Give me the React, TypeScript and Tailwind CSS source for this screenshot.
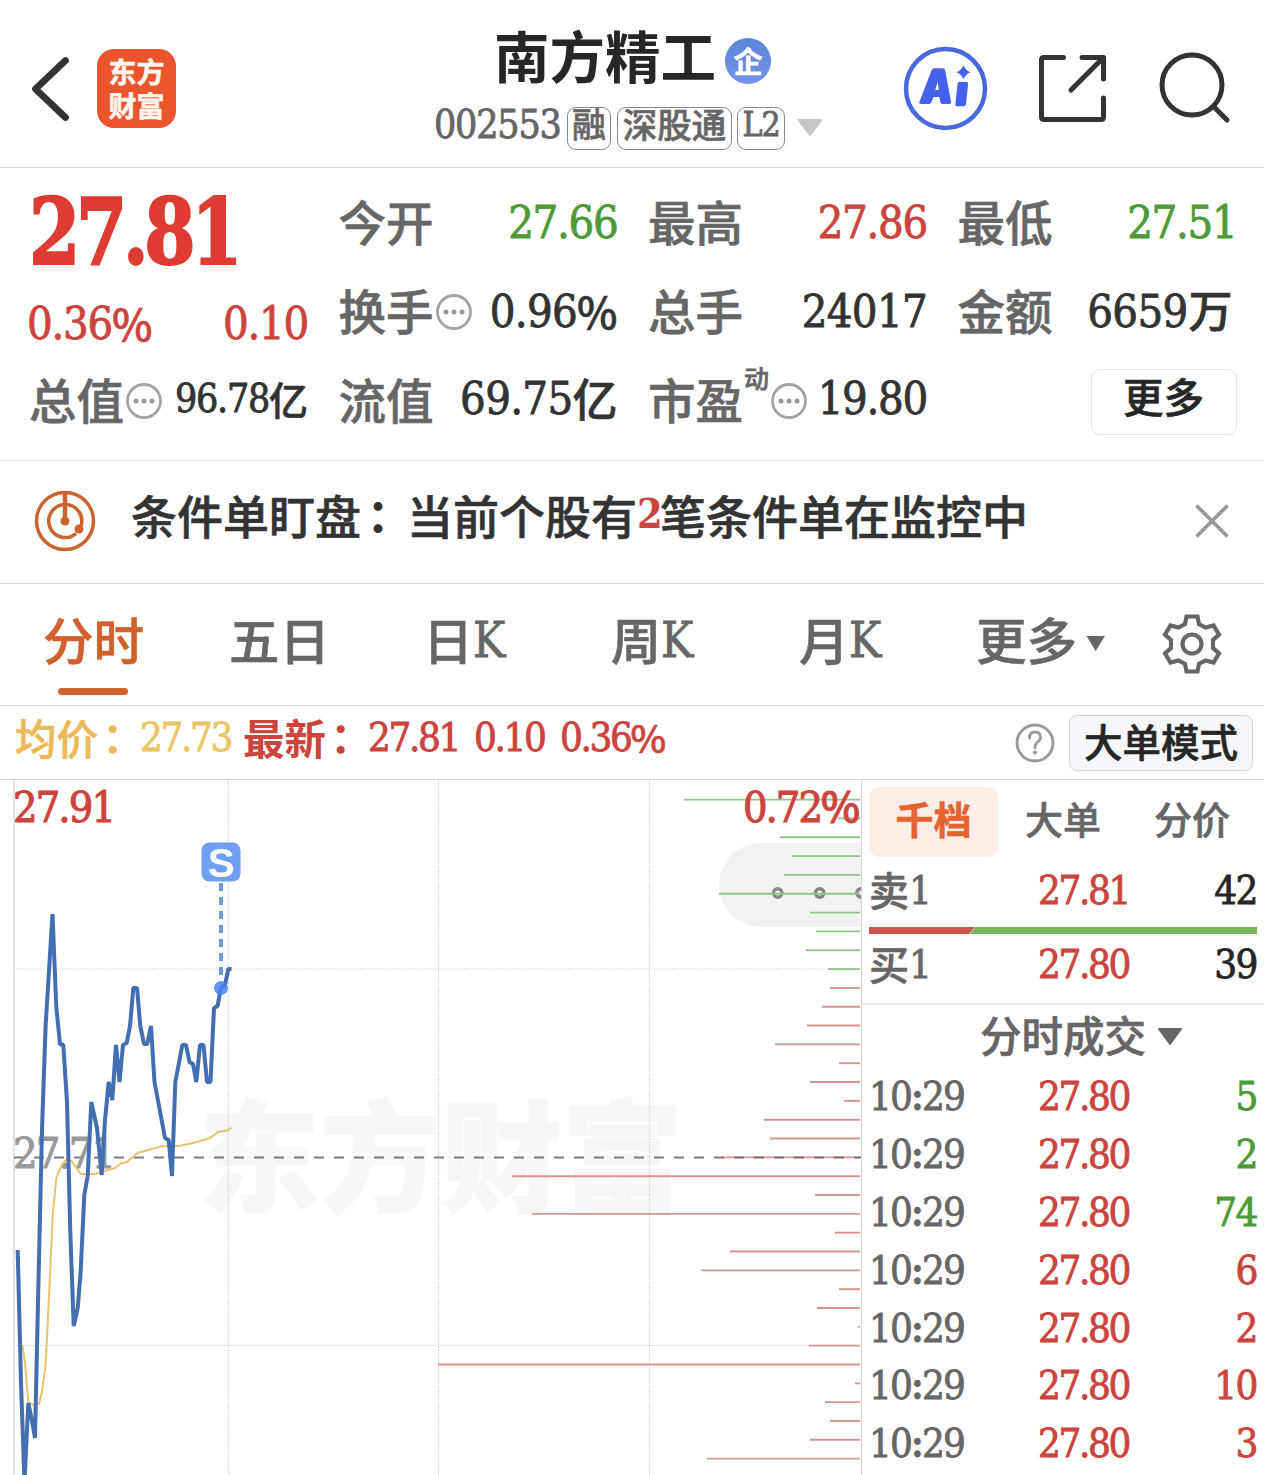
import React from "react";

function Num({ children, className = "" }: { children: React.ReactNode; className?: string }) {
  return (
    <span
      className={
        "whitespace-nowrap font-['DejaVu_Serif_Condensed','DejaVu_Serif','Noto_Sans_CJK_SC',serif] [font-stretch:condensed] [-webkit-text-stroke:0.8px_currentColor] " +
        className
      }
    >
      {children}
    </span>
  );
}

function Cjk({ children, className = "" }: { children: React.ReactNode; className?: string }) {
  return (
    <span className={"whitespace-nowrap font-['Noto_Sans_CJK_SC',sans-serif] [-webkit-text-stroke:0.6px_currentColor] " + className}>
      {children}
    </span>
  );
}

function Colon({ className = "" }: { className?: string }) {
  return <span className={"font-['Noto_Sans_CJK_TC',sans-serif] font-bold " + className}>：</span>;
}

function Dots({ className }: { className: string }) {
  return (
    <svg className={"mt-[1px] h-[38px] w-[38px] shrink-0 " + className} viewBox="0 0 38 38">
      <circle cx="19" cy="19" r="16.5" fill="none" stroke="#a3a3a3" strokeWidth="2.8" />
      <circle cx="11" cy="19" r="2.5" fill="#999" />
      <circle cx="19" cy="19" r="2.5" fill="#999" />
      <circle cx="27" cy="19" r="2.5" fill="#999" />
    </svg>
  );
}

function Header() {
  return (
    <header className="flex h-[168px] shrink-0 border-b border-[#d6d6d6]">
      <div className="flex w-[420px] items-start">
        <svg className="mt-[54px] ml-[28px] h-[70px] w-[44px]" viewBox="28 54 44 70">
          <path d="M65.500 60.500L35.500 89L65.500 117.500" fill="none" stroke="#333" strokeWidth="6.800" strokeLinecap="round" strokeLinejoin="round" />
        </svg>
        <div className="mt-[49px] ml-[25px] flex h-[79px] w-[79px] flex-col items-center rounded-[17px] bg-[#ea552b] pt-[5px] text-[28px] leading-[34px] font-bold text-[#fff6f0]">
          <Cjk>东方</Cjk>
          <Cjk>财富</Cjk>
        </div>
      </div>
      <div className="flex w-[430px] flex-col">
        <div className="flex h-[100px] pl-[74px]">
          <Cjk className="mt-[14px] text-[55.500px] leading-[80px] font-bold text-[#262626] [-webkit-text-stroke:0px]">南方精工</Cjk>
          <div className="mt-[38px] ml-[9px] flex h-[46px] w-[46px] items-center justify-center rounded-full bg-gradient-to-b from-[#5d83d8] to-[#7394e8]">
            <Cjk className="-mt-[3px] text-[29px] leading-[40px] font-bold text-white">企</Cjk>
          </div>
        </div>
        <div className="flex h-[60px] pl-[14px] text-[#666]">
          <Num className="mt-[1px] w-[133px] text-[39px] leading-[48px] tracking-[-1.200px]">002553</Num>
          <div className="mt-[7px] flex h-[43px] w-[44px] items-start justify-center rounded-[9px] border-[1.500px] border-[#888]">
            <Cjk className="text-[34px] leading-[30px] font-medium">融</Cjk>
          </div>
          <div className="mt-[7px] ml-[6px] flex h-[43px] w-[115px] items-start justify-center rounded-[9px] border-[1.500px] border-[#888]">
            <Cjk className="text-[34.500px] leading-[30px] font-medium">深股通</Cjk>
          </div>
          <div className="mt-[7px] ml-[5px] flex h-[43px] w-[48px] items-start justify-center rounded-[9px] border-[1.500px] border-[#888]">
            <Num className="text-[33.500px] leading-[34px] tracking-[-1px]">L2</Num>
          </div>
          <svg className="mt-[18px] ml-[11px] h-[20px] w-[28px]" viewBox="0 0 28 20">
            <path d="M2.500 2H25.500L14 17Z" fill="#c6c6c6" stroke="#c6c6c6" strokeWidth="2" strokeLinejoin="round" />
          </svg>
        </div>
      </div>
      <svg className="h-[167px] w-[414px]" viewBox="850 0 414 167" fill="none">
        <circle cx="945.500" cy="88.500" r="39.500" stroke="#4a68de" strokeWidth="4.500" />
        <path
          fillRule="evenodd"
          d="M931.500 70.500Q932.200 68.300 934.500 68.300H942.500Q944.700 68.300 945.200 70.500L951 101.500Q951.300 104 949 104H942.500Q940.500 104 940.200 102L939.400 97H933.500L931.500 102Q930.800 104 928.800 104H921Q918.500 104 919.500 101.500ZM935.300 90H938.700L937.800 81.500Z"
          fill="#4363ee"
        />
        <path d="M959.500 82H966.500Q968.300 82 968.100 84L966 104Q965.700 106.300 963.800 106.300H957Q955.200 106.300 955.400 104L957.500 84Q957.700 82 959.500 82Z" fill="#4363ee" />
        <path d="M963.500 65.500Q966 70.500 970.500 72.200Q966 74 963.500 79Q961 74 956.500 72.200Q961 70.500 963.500 65.500Z" fill="#4363ee" />
        <g stroke="#333" strokeWidth="5" strokeLinecap="round" strokeLinejoin="round">
          <path d="M1063.500 57.500H1044Q1041.500 57.500 1041.500 60V117Q1041.500 119.500 1044 119.500H1101Q1103.500 119.500 1103.500 117V98" />
          <path d="M1082 57.500H1103.500V79M1103.500 57.500L1071 90" />
          <circle cx="1192" cy="85" r="30" />
          <path d="M1214 107L1227 120" />
        </g>
      </svg>
    </header>
  );
}

function Stat({
  label,
  children,
  color = "text-[#333]",
  info,
  sup,
}: {
  label: string;
  children: React.ReactNode;
  color?: string;
  info?: boolean;
  sup?: string;
}) {
  return (
    <div className="flex h-[89px] items-center">
      <Cjk className="-mt-[5px] text-[47.500px] leading-[89px] font-medium text-[#666]">{label}</Cjk>
      {sup && <Cjk className="-mt-[48px] ml-[1px] w-[26px] text-[25px] leading-[30px] font-medium text-[#666]">{sup}</Cjk>}
      {info && <Dots className={sup ? "" : "ml-[1px]"} />}
      <span className={"ml-auto flex items-center " + color}>{children}</span>
    </div>
  );
}

const V = "text-[45px] leading-[80px] tracking-[-1.300px]";
const VI = "text-[45px] leading-[80px] tracking-[-0.700px]";

function Quote() {
  return (
    <section className="grid h-[293px] shrink-0 grid-cols-[279px_279px_279px_279px] grid-rows-[89px_89px_89px] gap-x-[30.500px] border-b border-[#ececec] pt-[10px] pl-[29px]">
      <div className="row-span-2 flex flex-col">
        <Num className="mt-[6px] origin-left scale-x-[0.900] text-[91px] leading-[96px] font-bold tracking-[-4.800px] text-[#de3b33] [-webkit-text-stroke:2px_currentColor]">
          27.81
        </Num>
        <div className="mt-[4px] -ml-[2px] flex justify-between text-[#cb443d]">
          <span className="flex items-center">
            <Num className={V}>0.36</Num>
            <Cjk className="-mt-[4px] text-[43px] leading-[80px] font-medium">%</Cjk>
          </span>
          <Num className={V}>0.10</Num>
        </div>
      </div>
      <Stat label="今开" color="text-[#4d9a38]">
        <Num className={V}>27.66</Num>
      </Stat>
      <Stat label="最高" color="text-[#cb443d]">
        <Num className={V}>27.86</Num>
      </Stat>
      <Stat label="最低" color="text-[#4d9a38]">
        <Num className={V}>27.51</Num>
      </Stat>
      <Stat label="换手" info>
        <Num className={VI}>0.96</Num>
        <Cjk className="-mt-[4px] text-[43px] leading-[80px] font-medium">%</Cjk>
      </Stat>
      <Stat label="总手">
        <Num className={VI}>24017</Num>
      </Stat>
      <Stat label="金额">
        <Num className={VI}>6659</Num>
        <Cjk className="-mt-[5px] mr-[4px] ml-[1px] text-[44px] leading-[80px] font-medium">万</Cjk>
      </Stat>
      <Stat label="总值" info>
        <Num className="-mt-[4px] text-[39px] leading-[80px] tracking-[-1.300px]">96.78</Num>
        <Cjk className="-mt-[6px] text-[39px] leading-[80px] font-medium">亿</Cjk>
      </Stat>
      <Stat label="流值">
        <Num className={"-mt-[4px] " + VI}>69.75</Num>
        <Cjk className="-mt-[6px] text-[45px] leading-[80px] font-medium">亿</Cjk>
      </Stat>
      <Stat label="市盈" info sup="动">
        <Num className={"-mt-[4px] " + V}>19.80</Num>
      </Stat>
      <div className="mt-[13px] ml-auto flex h-[66px] w-[146px] items-start justify-center rounded-[9px] border-[1.500px] border-[#e4e4e4]">
        <Cjk className="text-[40.500px] leading-[51px] font-medium text-[#262626]">更多</Cjk>
      </div>
    </section>
  );
}

function Notice() {
  return (
    <section className="flex h-[123px] shrink-0 border-b border-[#d6d6d6]">
      <svg className="mt-[28px] ml-[33px] h-[64px] w-[64px]" viewBox="0 0 64 64" fill="none" stroke="#c9632f">
        <circle cx="32" cy="32" r="28.500" strokeWidth="3.500" />
        <path d="M32 15.500A16.500 16.500 0 1 0 43 44.500M32 15.500A16.500 16.500 0 0 1 48 37" strokeWidth="3.500" />
        <path d="M32 4V32" strokeWidth="4.500" />
        <circle cx="32" cy="32" r="4.500" fill="#c9632f" stroke="none" />
        <circle cx="46" cy="40" r="4.500" fill="#c9632f" stroke="none" />
      </svg>
      <div className="mt-[13px] ml-[34px] flex text-[46px] leading-[80px] font-medium text-[#333]">
        <Cjk>条件单盯盘</Cjk>
        <Colon className="-ml-[6px] w-[52px]" />
        <Cjk>当前个股有</Cjk>
        <Num className="w-[23px] text-[41px] font-bold tracking-[-1px] text-[#cb443d] [-webkit-text-stroke:0px]">2</Num>
        <Cjk>笔条件单在监控中</Cjk>
      </div>
      <svg className="mt-[42px] mr-[34px] ml-auto h-[36px] w-[36px]" viewBox="0 0 36 36">
        <path d="M2.500 2.500L33.500 33.500M33.500 2.500L2.500 33.500" stroke="#999" strokeWidth="3.800" />
      </svg>
    </section>
  );
}

function KTab({ ch, className }: { ch: string; className: string }) {
  return (
    <div className={"flex text-[#666] " + className}>
      <Cjk className="text-[50px] leading-[108px] font-medium">{ch}</Cjk>
      <Num className="text-[48px] leading-[112px]">K</Num>
    </div>
  );
}

function Tabs() {
  return (
    <nav className="flex h-[122px] shrink-0 border-b border-[#d6d6d6] pl-[43px]">
      <div className="flex w-[186px] flex-col">
        <Cjk className="text-[50.500px] leading-[108px] font-medium text-[#d0612c]">分时</Cjk>
        <div className="-mt-[4px] ml-[15px] h-[7px] w-[70px] rounded-full bg-[#d0612c]" />
      </div>
      <Cjk className="w-[194px] text-[50.500px] leading-[108px] font-medium text-[#666]">五日</Cjk>
      <KTab ch="日" className="w-[188px]" />
      <KTab ch="周" className="w-[188px]" />
      <KTab ch="月" className="w-[177px]" />
      <Cjk className="text-[50.500px] leading-[108px] font-medium text-[#666]">更多</Cjk>
      <svg className="mt-[51px] ml-[8px] h-[18px] w-[22px]" viewBox="0 0 22 18">
        <path d="M1.500 1H20L10.700 16Z" fill="#666" />
      </svg>
      <svg className="mt-[28px] ml-[53px] h-[64px] w-[64px]" viewBox="-32 -32 64 64" fill="none" stroke="#666" strokeWidth="4.200">
        <path d="M-5.500 -27.500H5.500L7 -20L13.500 -16.500L21.500 -18.500L27 -9.500L21 -4V4L27 9.500L21.500 18.500L13.500 16.500L7 20L5.500 27.500H-5.500L-7 20L-13.500 16.500L-21.500 18.500L-27 9.500L-21 4V-4L-27 -9.500L-21.500 -18.500L-13.500 -16.500L-7 -20Z" />
        <circle r="9.500" />
      </svg>
    </nav>
  );
}

const S = "text-[40px] leading-[62px] tracking-[-2.400px]";

function InfoBar() {
  return (
    <section className="flex h-[74px] shrink-0 border-b border-[#d6d6d6] pl-[15px]">
      <div className="flex w-[125px] text-[41.500px] leading-[62px] font-medium text-[#ebba58]">
        <Cjk>均价</Cjk>
        <Colon className="-ml-[6px]" />
      </div>
      <Num className={"w-[103px] text-[#ebc566] " + S}>27.73</Num>
      <div className="flex w-[125px] text-[41.500px] leading-[62px] font-bold text-[#cb443d]">
        <Cjk className="[-webkit-text-stroke:0px]">最新</Cjk>
        <Colon className="-ml-[6px]" />
      </div>
      <Num className={"w-[106px] text-[#cb443d] " + S}>27.81</Num>
      <Num className={"w-[86px] text-[#cb443d] " + S}>0.10</Num>
      <Num className={"text-[#cb443d] " + S}>0.36</Num>
      <Cjk className="text-[38px] leading-[61px] font-medium text-[#cb443d]">%</Cjk>
      <svg className="mt-[16px] mr-[13px] ml-auto h-[42px] w-[42px]" viewBox="0 0 42 42" fill="none" stroke="#9a9a9a">
        <circle cx="21" cy="21" r="18" strokeWidth="3" />
        <path d="M15.500 16Q15.500 10 21 10Q26.500 10 26.500 15.500Q26.500 18 23.500 20Q21 22 21 25V26" strokeWidth="2.800" strokeLinecap="round" />
        <circle cx="21" cy="30.500" r="2.100" fill="#9a9a9a" stroke="none" />
      </svg>
      <div className="mt-[9px] mr-[11px] flex h-[56px] w-[184px] justify-center rounded-[8px] border-[1.500px] border-[#d2d3d6] bg-[#f6f7fa]">
        <Cjk className="text-[38.500px] leading-[48px] font-medium text-[#262626]">大单模式</Cjk>
      </div>
    </section>
  );
}

const price =
  "17.7,1250 21,1383 24.5,1482 28.3,1403 31.8,1420 35,1438 38.3,1289 42,1130 45.6,1026 52.5,914 56.3,1007 60,1044 63.3,1045 67,1102 70.3,1232 73.7,1326 77.7,1308 80.7,1271 84.3,1195 87.7,1176 91.3,1102 97,1128 101.7,1175 105,1120 108.7,1082 112.3,1100 116,1045 119.5,1082 123,1045 126.700,1043 130,1026 133.3,988 137,988 140.3,1026 144,1044 147.3,1044 151,1026 154.5,1082 163.5,1130 165,1138 168.7,1140 172,1176 175.3,1082 179,1063 182.3,1045 186,1045 189.5,1062 193,1064 196.3,1082 200,1045 203.5,1045 207,1082 210.5,1082 214,1008 217.5,1006 221,988 225,985 228.3,969 231.5,969";
const average =
  "22.3,1345 25,1363 28.3,1402 33.5,1405 39,1404 42.3,1390 45.7,1363 49,1297 52.7,1215 56.3,1178 61.7,1165 66.7,1159 71.7,1161 80.7,1174 95,1174 103,1171.5 115,1168 120.7,1163.5 126.7,1162 138.3,1152.7 161.7,1146.3 180,1145.7 193,1143 210,1138 218,1132 226.7,1130.5 231.5,1127.7";
const barStarts = [
  684, 838, 780, 792, 784, 719, 810, 816, 806, 828, 830, 822, 807, 775, 839, 810, 844, 764, 770, 722, 512, 815, 532, 835,
  730, 701.5, 839, 817, 858, 809, 438, 855, 825, 830, 810, 707,
];

function ChartLabel({ x, y, width, color, children }: { x: number; y: number; width: number; color: string; children: string }) {
  return (
    <text
      x={x}
      y={y}
      fontSize="43"
      textLength={width}
      fill={color}
      stroke={color}
      strokeWidth="1"
      fontFamily="DejaVu Serif Condensed, DejaVu Serif, serif"
      fontStretch="condensed"
    >
      {children}
    </text>
  );
}

function Chart() {
  return (
    <svg className="h-[695px] w-[861px] shrink-0 overflow-visible" viewBox="0 780 861 695">
      <text x="199" y="1202" textLength="484" lengthAdjust="spacingAndGlyphs" fontSize="121" fontWeight="900" fill="#f7f7f7" stroke="#f7f7f7" strokeWidth="1.500" fontFamily="Noto Sans CJK SC, sans-serif">
        东方财富
      </text>
      <path d="M861 843H761A42 42 0 0 0 761 927H861Z" fill="#f2f2f2" />
      <path d="M14 780V1475" stroke="#dcdcdc" strokeWidth="1.600" />
      <path d="M228.300 780V1475M438.500 780V1475M649.500 780V1475M14 969H861M14 1345.500H861" stroke="#cfcfcf" strokeWidth="1.200" strokeDasharray="1.300 1.300" />
      <circle cx="777.700" cy="893" r="4.200" fill="#fff" stroke="#858585" strokeWidth="3.400" />
      <circle cx="819.700" cy="893" r="4.200" fill="#fff" stroke="#858585" strokeWidth="3.400" />
      <path d="M861 888.800A4.200 4.200 0 0 0 861 897.200" fill="none" stroke="#858585" strokeWidth="3.400" />
      {barStarts.map((x, i) => (
        <path key={i} d={`M${x} ${799.6 + i * 18.83}H860`} stroke={i < 10 ? "#8fc687" : "#d69490"} strokeWidth="1.900" />
      ))}
      <path d="M14 1157.500H861" stroke="#666" strokeOpacity="0.850" strokeWidth="2" strokeDasharray="10 10" />
      <ChartLabel x={13} y={1168} width={103} color="#999">
        27.71
      </ChartLabel>
      <polyline points={average} fill="none" stroke="#e8c26c" strokeWidth="2" />
      <path d="M221 883V980" stroke="#6f9ad6" strokeWidth="4" strokeDasharray="8 6" />
      <polyline points={price} fill="none" stroke="#416fb2" strokeWidth="4" strokeLinejoin="bevel" />
      <circle cx="221" cy="988" r="7" fill="#4a82f0" fillOpacity="0.850" />
      <rect x="201.500" y="842.500" width="39" height="39" rx="8" fill="#6f9ff3" />
      <text x="221" y="877" fontSize="40" fontWeight="700" textAnchor="middle" fill="#fff" fontFamily="Liberation Sans, sans-serif">
        S
      </text>
      <ChartLabel x={13} y={822} width={103} color="#cb443d">
        27.91
      </ChartLabel>
      <ChartLabel x={743} y={822} width={80} color="#cb443d">
        0.72
      </ChartLabel>
      <text x="821" y="822" fontSize="41" fontWeight="500" textLength="39" lengthAdjust="spacingAndGlyphs" fill="#cb443d" stroke="#cb443d" fontFamily="Noto Sans CJK SC, sans-serif">
        %
      </text>
    </svg>
  );
}

function Row({ left, price, qty, color, className }: { left: React.ReactNode; price: string; qty: string; color: string; className: string }) {
  return (
    <div className={"flex pr-[7px] pl-[7px] " + className}>
      <div className="flex w-[169px] text-[#666]">{left}</div>
      <Num className="text-[40px] tracking-[-2.400px] text-[#cb443d]">{price}</Num>
      <Num className={"ml-auto text-[40px] tracking-[-1.500px] " + color}>{qty}</Num>
    </div>
  );
}

const trades = [
  ["5", "text-[#4d9a38]"],
  ["2", "text-[#4d9a38]"],
  ["74", "text-[#4d9a38]"],
  ["6", "text-[#cb443d]"],
  ["2", "text-[#cb443d]"],
  ["10", "text-[#cb443d]"],
  ["3", "text-[#cb443d]"],
];

function Level({ name }: { name: string }) {
  return (
    <>
      <Cjk className="-mt-[1px] text-[40px] font-medium">{name}</Cjk>
      <Num className="text-[40px]">1</Num>
    </>
  );
}

function Side() {
  return (
    <aside className="flex w-[403px] shrink-0 flex-col border-l-[1.500px] border-[#d6d6d6]">
      <div className="mt-[7px] ml-[7px] flex h-[70px] text-[38px] leading-[61px]">
        <div className="flex h-[70px] w-[129px] justify-center rounded-[10px] bg-[#fcede6]">
          <Cjk className="font-bold text-[#e4632f] [-webkit-text-stroke:0.3px_currentColor]">千档</Cjk>
        </div>
        <Cjk className="ml-[27px] font-medium text-[#666]">大单</Cjk>
        <Cjk className="ml-[53px] font-medium text-[#666]">分价</Cjk>
      </div>
      <Row className="h-[70px] leading-[66px]" left={<Level name="卖" />} price="27.81" qty="42" color="text-[#262626]" />
      <svg className="ml-[7px] h-[7px] w-[388px]" viewBox="0 0 388 7">
        <path d="M0 0H106L100 7H0Z" fill="#cd5550" />
        <path d="M106.500 0H388V7H100.500Z" fill="#76b559" />
      </svg>
      <Row className="h-[69px] leading-[60px]" left={<Level name="买" />} price="27.80" qty="39" color="text-[#262626]" />
      <div className="h-[2px] shrink-0 bg-[#e6e6e6]" />
      <div className="flex h-[62px] shrink-0 pl-[118px]">
        <Cjk className="text-[41.500px] leading-[59px] font-medium text-[#666]">分时成交</Cjk>
        <svg className="mt-[22px] ml-[11px] h-[20px] w-[26px]" viewBox="0 0 26 20">
          <path d="M2 2H24L13 17Z" fill="#666" stroke="#666" strokeWidth="2" strokeLinejoin="round" />
        </svg>
      </div>
      {trades.map(([q, c], i) => (
        <Row
          key={i}
          className="h-[57.900px] shrink-0 leading-[58px]"
          left={
            <Num className="text-[40px] tracking-[-2px]">
              10<b className="[-webkit-text-stroke:0px]">:</b>29
            </Num>
          }
          price="27.80"
          qty={q}
          color={c}
        />
      ))}
    </aside>
  );
}

export default function App() {
  return (
    <div className="flex h-[1475px] w-[1264px] flex-col overflow-hidden bg-white">
      <Header />
      <Quote />
      <Notice />
      <Tabs />
      <InfoBar />
      <main className="flex h-[695px]">
        <Chart />
        <Side />
      </main>
    </div>
  );
}
